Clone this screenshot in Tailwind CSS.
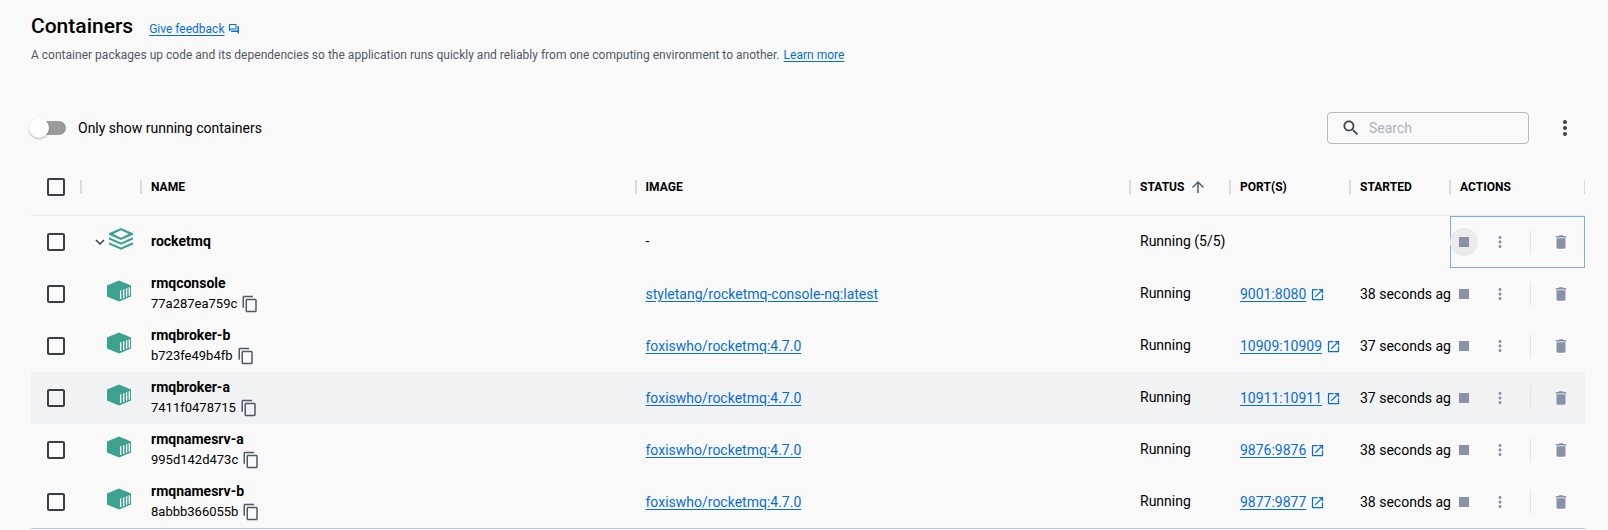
<!DOCTYPE html>
<html lang="en">
<head>
<meta charset="utf-8">
<title>Containers</title>
<script src="https://cdn.jsdelivr.net/npm/@tailwindcss/browser@4"></script>
</head>
<body class="h-[530px] overflow-hidden bg-[#f9f9f9] pl-[31px] font-['Roboto',sans-serif] text-sm text-black">
<svg class="hidden">
  <symbol id="check" viewBox="0 0 24 24"><path d="M19 5v14H5V5h14m0-2H5c-1.1 0-2 .9-2 2v14c0 1.1.9 2 2 2h14c1.1 0 2-.9 2-2V5c0-1.1-.9-2-2-2z"/></symbol>
  <symbol id="copy" viewBox="0 0 24 24"><path d="M16 1H4c-1.1 0-2 .9-2 2v14h2V3h12V1zm3 4H8c-1.1 0-2 .9-2 2v14c0 1.1.9 2 2 2h11c1.1 0 2-.9 2-2V7c0-1.1-.9-2-2-2zm0 16H8V7h11v14z"/></symbol>
  <symbol id="open" viewBox="0 0 24 24"><path d="M19 19H5V5h7V3H5c-1.11 0-2 .9-2 2v14c0 1.1.89 2 2 2h14c1.1 0 2-.9 2-2v-7h-2v7zM14 3v2h3.59l-9.83 9.83 1.41 1.41L19 6.41V10h2V3h-7z"/></symbol>
  <symbol id="more" viewBox="0 0 24 24"><path d="M12 8c1.100 0 2-.9 2-2s-.9-2-2-2-2 .9-2 2 .9 2 2 2zm0 2c-1.100 0-2 .9-2 2s.9 2 2 2 2-.9 2-2-.9-2-2-2zm0 6c-1.100 0-2 .9-2 2s.9 2 2 2 2-.9 2-2-.9-2-2-2z"/></symbol>
  <symbol id="trash" viewBox="0 0 24 24"><path d="M6 19c0 1.1.9 2 2 2h8c1.1 0 2-.9 2-2V7H6v12zM19 4h-3.500l-1-1h-5l-1 1H5v2h14V4z"/></symbol>
  <symbol id="stop" viewBox="0 0 24 24"><path d="M6 6h12v12H6z"/></symbol>
  <symbol id="box" viewBox="0 0 24 22"><path d="M12 .5 24 5.500v11L12 21.500 0 16.500v-11z"/><path d="M13.700 10.300v8.700M16.700 9.300v8.600M19.600 8.300v8.500M22.300 7.200v8.500" stroke="#f9f9f9" stroke-width="1.300" fill="none"/></symbol>
  <symbol id="stack" viewBox="0 0 24 22"><path fill-rule="evenodd" d="M12 0 24 5.200v1.600L12 12 0 6.800V5.200zM12 2.300 4.300 6 12 9.700 19.700 6z"/><path d="M0 9.200 12 14.400 24 9.200v2.400L12 16.800 0 11.600zM0 14.200 12 19.400 24 14.200v2.400L12 21.800 0 16.600z"/></symbol>
</svg>

<header class="h-[108px] pt-[10px]">
  <div class="flex h-8 items-center">
    <h1 class="text-[21px] leading-8 font-medium">Containers</h1>
    <a class="mt-[5px] ml-4 flex items-center text-xs leading-4 text-[#086dd7]"><span class="underline underline-offset-2">Give feedback</span>
      <svg class="mt-px ml-1 size-3 fill-current" viewBox="0 0 24 24"><path d="M15 4v7H5.170l-.59.59-.58.58V4h11m1-2H3c-.55 0-1 .45-1 1v14l4-4h10c.55 0 1-.45 1-1V3c0-.55-.45-1-1-1zm5 4h-2v9H6v2c0 .55.45 1 1 1h11l4 4V7c0-.55-.45-1-1-1z"/></svg></a>
  </div>
  <p class="mt-[5px] text-xs leading-4 tracking-[.013px] text-[#505968]">A container packages up code and its dependencies so the application runs quickly and reliably from one computing environment to another. <a class="ml-px text-[#086dd7] underline underline-offset-2">Learn more</a></p>
</header>

<section class="flex h-10 w-[1554px] items-center">
  <div class="-ml-0.5 flex items-center">
    <div class="flex h-[14px] w-[37px] items-center rounded-full bg-gradient-to-r from-transparent from-20% to-[#9b9b9b] to-20%"><span class="size-5 shrink-0 rounded-full bg-white shadow-[0_1px_2px_rgba(0,0,0,.3)]"></span></div>
    <span class="ml-3">Only show running containers</span>
  </div>
  <div class="ml-auto flex h-8 w-[202px] items-center rounded border border-[#b7b9bd] pl-[13px] text-[#adb1b9]">
    <svg class="mr-2 size-5 fill-[#393f49]" viewBox="0 0 24 24"><path d="M15.500 14h-.79l-.28-.27C15.410 12.590 16 11.110 16 9.500 16 5.910 13.090 3 9.500 3S3 5.910 3 9.500 5.910 16 9.500 16c1.610 0 3.090-.59 4.230-1.570l.27.28v.79l5 4.990L20.490 19l-4.990-5zm-6 0C7.010 14 5 11.990 5 9.500S7.010 5 9.500 5 14 7.010 14 9.500 11.990 14 9.500 14z"/></svg>Search
  </div>
  <svg class="mr-[8px] ml-[24px] size-6 fill-[#393f49]"><use href="#more"/></svg>
</section>

<main class="mt-3 w-[1554px] border-b border-[#c4c8d1]">
  <div class="grid h-[56px] grid-cols-[50px_60px_494.5px_494.5px_100px_120px_100px_135px] items-center border-b border-[#ebebec] pb-px text-xs font-bold tracking-[.03px]">
    <div class="flex h-[14px] items-center border-r border-[#dcdcde] pl-[13px]"><svg class="-my-2 size-6 fill-[#393f49]"><use href="#check"/></svg></div>
    <div class="h-[14px] border-x border-[#dcdcde]"></div>
    <div class="h-[14px] border-x border-[#dcdcde] pl-[9px] leading-[14px]">NAME</div>
    <div class="h-[14px] border-x border-[#dcdcde] pl-[9px] leading-[14px]">IMAGE</div>
    <div class="flex h-[14px] items-center border-x border-[#dcdcde] pl-[9px] leading-[14px]">STATUS<svg class="ml-[5px] size-[18px] fill-[#505968]" viewBox="0 0 24 24"><path d="m4 12 1.410 1.410L11 7.830V20h2V7.830l5.580 5.590L20 12l-8-8-8 8z"/></svg></div>
    <div class="h-[14px] border-x border-[#dcdcde] pl-[9px] leading-[14px]">PORT(S)</div>
    <div class="h-[14px] border-x border-[#dcdcde] pl-[9px] leading-[14px]">STARTED</div>
    <div class="h-[14px] border-x border-[#dcdcde] pl-[9px] leading-[14px]">ACTIONS</div>
  </div>
  <div id="rows"></div>
</main>

<script>
const actions = group => `
  <div class="flex h-full items-center border fill-[#8993a8] ${group ? 'border-[#7aaee8]' : 'border-transparent'}">
    <span class="-ml-px flex size-7 items-center justify-center rounded-full ${group ? 'bg-[#ebebeb]' : ''}"><svg class="size-5"><use href="#stop"/></svg></span>
    <svg class="ml-[13px] size-[18px]"><use href="#more"/></svg>
    <span class="ml-[21px] h-6 w-px bg-[#e4e5e8]"></span>
    <svg class="ml-[21px] size-[18px]"><use href="#trash"/></svg>
  </div>`;
const check = `<svg class="ml-[13px] size-6 fill-[#393f49]"><use href="#check"/></svg>`;
const list = [
  ['rmqconsole', '77a287ea759c', 'styletang/rocketmq-console-ng:latest', '9001:8080', 38],
  ['rmqbroker-b', 'b723fe49b4fb', 'foxiswho/rocketmq:4.7.0', '10909:10909', 37],
  ['rmqbroker-a', '7411f0478715', 'foxiswho/rocketmq:4.7.0', '10911:10911', 37, true],
  ['rmqnamesrv-a', '995d142d473c', 'foxiswho/rocketmq:4.7.0', '9876:9876', 38],
  ['rmqnamesrv-b', '8abbb366055b', 'foxiswho/rocketmq:4.7.0', '9877:9877', 38],
];
const row = 'grid h-[52px] grid-cols-[50px_60px_494.5px_494.5px_100px_120px_100px_135px] items-center whitespace-nowrap';
document.getElementById('rows').innerHTML = `
  <div class="${row}">
    ${check}
    <div class="flex items-center pl-[10px]"><svg class="size-[18px] fill-[#393f49]" viewBox="0 0 24 24"><path d="M16.590 8.590 12 13.170 7.410 8.590 6 10l6 6 6-6z"/></svg><svg class="mb-[6px] h-[22px] w-6 shrink-0 fill-[#3ca18e]"><use href="#stack"/></svg></div>
    <div class="pb-0.5 pl-[10px] font-bold">rocketmq</div>
    <div class="pb-0.5 pl-[10px]">-</div>
    <div class="pb-0.5 pl-[10px]">Running (5/5)</div>
    <div></div><div></div>
    ${actions(true)}
  </div>` + list.map(([name, id, image, port, sec, hover]) => `
  <div class="${row} ${hover ? 'bg-[#f0f2f4]' : ''}">
    ${check}
    <svg class="mb-[6px] ml-[26px] h-[22px] w-6 fill-[#3ca18e]"><use href="#box"/></svg>
    <div class="pb-px pl-[10px]"><div class="h-[21px] leading-5 font-bold">${name}</div><div class="flex h-5 items-center text-[13px]">${id}<svg class="ml-1 size-[18px] fill-[#505968]"><use href="#copy"/></svg></div></div>
    <a class="pl-[10px] text-[#086dd7] underline underline-offset-2">${image}</a>
    <div class="pb-0.5 pl-[10px]">Running</div>
    <div class="flex items-center pl-[10px] text-[#086dd7]"><span class="underline underline-offset-2">${port}</span><svg class="mt-px ml-[3.500px] size-[15px] fill-current"><use href="#open"/></svg></div>
    <div class="pl-[10px]">${sec} seconds ag</div>
    ${actions(false)}
  </div>`).join('');
</script>
</body>
</html>
